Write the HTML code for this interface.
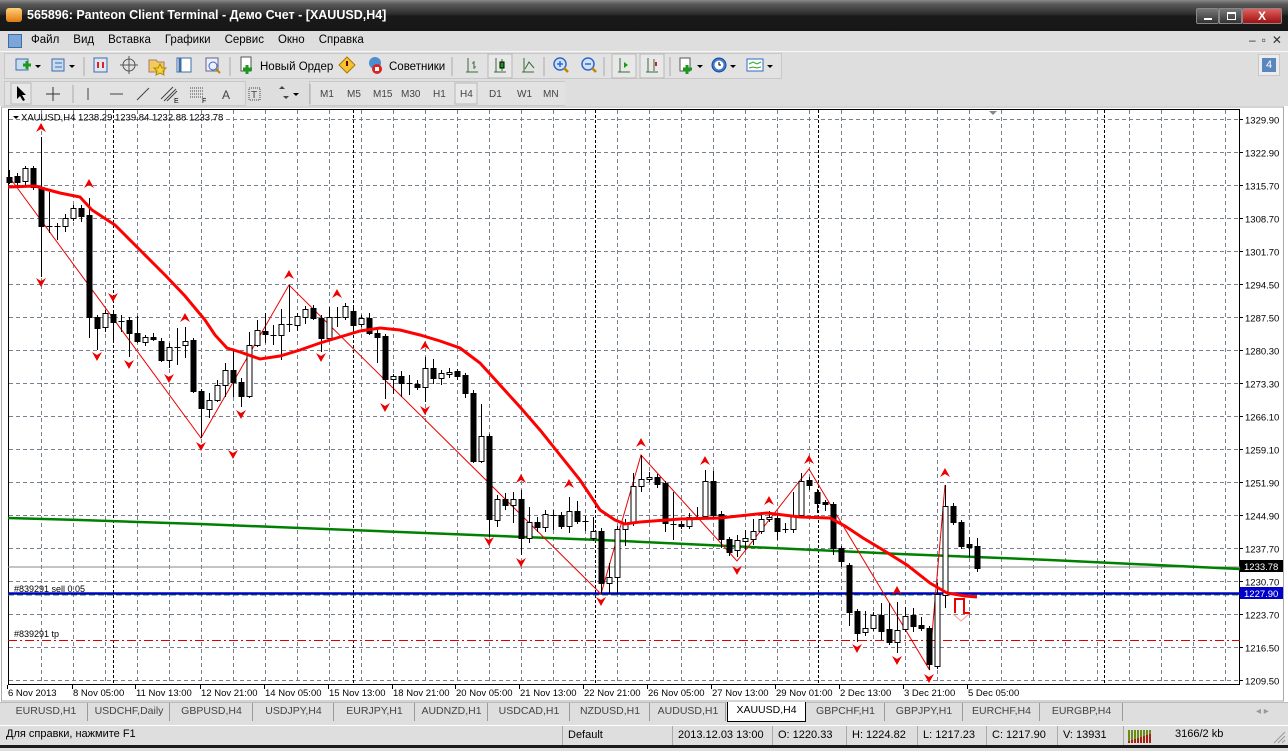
<!DOCTYPE html>
<html><head><meta charset="utf-8">
<style>
*{margin:0;padding:0;box-sizing:border-box}
body{width:1288px;height:748px;overflow:hidden;background:#dedede;font-family:"Liberation Sans","DejaVu Sans",sans-serif;font-size:11px;color:#000;position:relative}
.abs{position:absolute}
#title{left:0;top:0;width:1288px;height:31px;background:linear-gradient(#8a8a8a 0px,#5a5a5a 4px,#2e2e2e 14px,#1a1a1a 16px,#161616 31px);color:#fff;font-weight:bold;font-size:12.5px}
.menu span{margin-right:14px}
.tb{border:1px solid #c8c8c8;background:#e2e2e2}
.tab{position:absolute;top:0;height:18px;line-height:17px;border-right:1px solid #9a9a9a;text-align:center;font-size:10.5px;color:#444}
.st{position:absolute;top:0;height:19px;line-height:18px;font-size:11px;border-left:1px solid #aaa;padding-left:5px}
</style></head><body>
<div id="title" class="abs">
 <div class="abs" style="left:6px;top:8px;width:16px;height:14px;border-radius:3px;background:linear-gradient(#ffcf7a,#e07a10)"></div>
 <div class="abs" style="left:27px;top:8px;">565896: Panteon Client Terminal - Демо Счет - [XAUUSD,H4]</div>
 <div class="abs" style="left:1196px;top:8px;width:23px;height:16px;border:1px solid #888;background:linear-gradient(#777,#333);border-radius:2px"><div style="margin:9px 0 0 7px;width:8px;height:2px;background:#fff"></div></div>
 <div class="abs" style="left:1219px;top:8px;width:23px;height:16px;border:1px solid #888;background:linear-gradient(#777,#333)"><div style="margin:3px 0 0 7px;width:9px;height:8px;border:1px solid #fff;border-top-width:2px"></div></div>
 <div class="abs" style="left:1242px;top:8px;width:40px;height:16px;border:1px solid #888;background:linear-gradient(#e06060,#a01010);border-radius:2px;text-align:center;font-size:12px;line-height:14px">X</div>
</div>
<div class="abs menu" style="left:0;top:32px;width:1288px;height:19px;background:#dedede;font-size:11.5px;">
 <div class="abs" style="left:8px;top:2px;width:14px;height:14px;background:#7aa6d8;border:1px solid #3d6ca8"></div>
 <div class="abs" style="left:31px;top:2px;"><span>Файл</span><span>Вид</span><span>Вставка</span><span>Графики</span><span>Сервис</span><span>Окно</span><span>Справка</span></div>
 <div class="abs" style="left:1249px;top:1px;color:#333;font-size:12px;letter-spacing:6px">–▫✕</div>
</div>
<div class="abs" style="left:0;top:51px;width:1288px;height:1px;background:#f8f8f8"></div>
<div class="abs tb" style="left:4px;top:53px;width:778px;height:26px"></div>
<div class="abs" style="left:1258px;top:54px;width:22px;height:22px;background:#ececec;border:1px solid #c8c8c8"><div style="margin:3px;width:14px;height:14px;background:#5a86c0;color:#fff;font-size:11px;text-align:center;line-height:14px">4</div></div>
<svg class="abs" style="left:0;top:53px" width="790" height="27">
 <g fill="none" stroke-width="1">
 <rect x="16" y="6" width="12" height="11" fill="#c8dcf0" stroke="#3d6ca8"/><path d="M23 12h8M27 8v8" stroke="#1a9a1a" stroke-width="3"/><path d="M35 12l3 3 3-3z" fill="#000"/>
 <rect x="52" y="6" width="12" height="12" fill="#c8dcf0" stroke="#3d6ca8"/><path d="M55 10h7M55 14h7" stroke="#3d6ca8"/><path d="M69 12l3 3 3-3z" fill="#000"/>
 <line x1="84" y1="4" x2="84" y2="23" stroke="#aaa"/>
 <rect x="94" y="5" width="13" height="14" fill="#dde8f4" stroke="#3d6ca8"/><path d="M98 9v6M103 9v6" stroke="#d22" stroke-width="2"/>
 <circle cx="129" cy="12" r="6" stroke="#555"/><path d="M129 3v18M120 12h18" stroke="#555"/>
 <path d="M149 7h7l2 2h6v10h-15z" fill="#f2cc5a" stroke="#a77"/><path d="M160 11l2 4 4 0-3 3 1 4-4-2-4 2 1-4-3-3 4 0z" fill="#f6d23a" stroke="#a80"/>
 <rect x="177" y="5" width="14" height="14" fill="#fff" stroke="#3d6ca8"/><path d="M180 5v14" stroke="#3d6ca8" stroke-width="3"/>
 <rect x="206" y="5" width="12" height="13" fill="#eef" stroke="#667"/><circle cx="213" cy="13" r="4" stroke="#36c"/><path d="M216 16l4 4" stroke="#b80" stroke-width="2"/>
 <line x1="230" y1="4" x2="230" y2="23" stroke="#aaa"/>
 <rect x="241" y="4" width="10" height="14" fill="#fff" stroke="#555"/><path d="M243 16h9M247 12v9" stroke="#1a9a1a" stroke-width="3"/>
 <path d="M347 4l8 8-8 8-8-8z" fill="#f4c430" stroke="#a70"/><path d="M347 8v5" stroke="#600" stroke-width="2"/>
 <circle cx="375" cy="10" r="6" fill="#4a90d0"/><circle cx="377" cy="16" r="5" fill="#d22"/><rect x="375" y="14" width="4" height="4" fill="#fff"/>
 <line x1="452" y1="4" x2="452" y2="23" stroke="#aaa"/>
 <path d="M468 5v14M466 19h12M474 8v8M472 10h2M474 14h2" stroke="#3a6a3a"/>
 <rect x="488" y="1" width="24" height="24" fill="#e8e8e8" stroke="#b8b8b8"/><path d="M496 5v14M494 19h12M502 6v12" stroke="#3a6a3a"/><rect x="500" y="9" width="4" height="6" fill="#1a9a1a" stroke="#000"/>
 <path d="M524 5v14M522 19h12M525 16l4-7 5 6" stroke="#3a6a3a"/>
 <line x1="544" y1="4" x2="544" y2="23" stroke="#aaa"/>
 <circle cx="560" cy="11" r="6" fill="#cfe2f6" stroke="#36c" stroke-width="1.5"/><path d="M557 11h6M560 8v6" stroke="#36c" stroke-width="1.5"/><path d="M564 15l4 4" stroke="#b80" stroke-width="2.5"/>
 <circle cx="588" cy="11" r="6" fill="#cfe2f6" stroke="#36c" stroke-width="1.5"/><path d="M585 11h6" stroke="#36c" stroke-width="1.5"/><path d="M592 15l4 4" stroke="#b80" stroke-width="2.5"/>
 <line x1="604" y1="4" x2="604" y2="23" stroke="#aaa"/>
 <rect x="612" y="1" width="24" height="24" fill="#e8e8e8" stroke="#b8b8b8"/><path d="M620 5v14M618 19h12" stroke="#3a6a3a"/><path d="M624 9l4 3-4 3z" fill="#1a9a1a"/>
 <rect x="640" y="1" width="24" height="24" fill="#e8e8e8" stroke="#b8b8b8"/><path d="M648 5v14M646 19h12M654 6v12" stroke="#3a6a3a"/><path d="M656 9v4" stroke="#c22" stroke-width="2"/>
 <line x1="670" y1="4" x2="670" y2="23" stroke="#aaa"/>
 <rect x="680" y="5" width="10" height="13" fill="#fff" stroke="#555"/><path d="M683 16h9M687 12v9" stroke="#1a9a1a" stroke-width="3"/><path d="M697 12l3 3 3-3z" fill="#000"/>
 <circle cx="719" cy="12" r="7" fill="#3a7ad0" stroke="#1a4a90"/><circle cx="719" cy="12" r="4.5" fill="#fff"/><path d="M719 9v3h2" stroke="#000"/><path d="M730 12l3 3 3-3z" fill="#000"/>
 <rect x="747" y="6" width="16" height="12" fill="#fff" stroke="#36c"/><path d="M749 11l4-2 4 2 4-2M749 15l4-1 4 1 4-1" stroke="#2a2"/><path d="M767 12l3 3 3-3z" fill="#000"/>
 </g>
 <text x="260" y="17" font-family="Liberation Sans" font-size="11.5">Новый Ордер</text>
 <text x="389" y="17" font-family="Liberation Sans" font-size="11.5">Советники</text>
</svg>
<div class="abs tb" style="left:4px;top:81px;width:242px;height:25px"></div>
<div class="abs tb" style="left:309px;top:81px;width:256px;height:25px;border-right:none"></div>
<svg class="abs" style="left:0;top:81px" width="600" height="26">
 <rect x="11" y="2" width="20" height="21" fill="#e8e8e8" stroke="#b8b8b8"/>
 <path d="M17 5v13l3-3 3 5 2-1-3-5h4z" fill="#000"/>
 <path d="M53 6v14M46 13h14" stroke="#333"/>
 <line x1="73" y1="4" x2="73" y2="22" stroke="#aaa"/>
 <path d="M88 7v12M110 13h13M137 19l12-12" stroke="#444"/>
 <path d="M161 18l12-12M164 20l12-12M167 20l10-10" stroke="#444"/><text x="174" y="22" font-size="7" font-family="Liberation Sans">E</text>
 <path d="M190 7h14M190 10h14M190 13h14M190 16h14" stroke="#444" stroke-dasharray="1 1"/><text x="202" y="22" font-size="7" font-family="Liberation Sans">F</text>
 <text x="222" y="18" font-size="12" fill="#444" font-family="Liberation Sans">A</text>
 <rect x="249" y="7" width="11" height="12" fill="none" stroke="#444" stroke-dasharray="1 1"/><text x="251" y="17" font-size="10" fill="#444" font-family="Liberation Sans">T</text>
 <path d="M279 8l3-3 3 3zM283 15l3 3 3-3z" fill="#444"/><path d="M293 12l3 3 3-3z" fill="#000"/>
 <line x1="310" y1="3" x2="310" y2="23" stroke="#aaa"/>
 <rect x="455" y="2" width="22" height="21" fill="#e8e8e8" stroke="#b8b8b8"/>
 <g font-family="Liberation Sans" font-size="10" fill="#444">
 <text x="320" y="16">M1</text><text x="347" y="16">M5</text><text x="373" y="16">M15</text><text x="401" y="16">M30</text><text x="433" y="16">H1</text><text x="460" y="16">H4</text><text x="489" y="16">D1</text><text x="517" y="16">W1</text><text x="543" y="16">MN</text>
 </g>
</svg>
<svg id="ch" class="abs" style="left:0;top:106px" width="1288" height="596" font-family="Liberation Sans" font-size="10">
<rect x="0" y="0" width="1288" height="596" fill="#fff"/>
<rect x="1.5" y="1" width="1282" height="594" fill="none" stroke="#aaa"/>
<g id="grid" stroke="#788090" stroke-dasharray="4 3"></g>
<g stroke="#000" stroke-dasharray="3 2">
<line x1="113.5" y1="4" x2="113.5" y2="578"/><line x1="353.5" y1="4" x2="353.5" y2="578"/><line x1="595.5" y1="4" x2="595.5" y2="578"/><line x1="818.5" y1="4" x2="818.5" y2="578"/><line x1="1104.5" y1="4" x2="1104.5" y2="578"/>
</g>
<rect x="8.5" y="3.5" width="1231" height="575" fill="none" stroke="#000"/>
<path d="M989 5l4 4 4-4z" fill="#888"/>
<line x1="8" y1="461" x2="1240" y2="461" stroke="#8a8a8a"/>
<line x1="8" y1="534.5" x2="1240" y2="534.5" stroke="#d00" stroke-dasharray="9 3 2 3"/>
<line x1="8" y1="489" x2="1240" y2="489" stroke="#1a9a1a" stroke-dasharray="6 3"/>
<path d="M8 412L80 414L200 418L300 422L450 428L600 434L750 441L900 448L1050 454L1240 463" stroke="#008000" stroke-width="2.5" fill="none"/>
<line x1="8" y1="487.5" x2="1240" y2="487.5" stroke="#0000c8" stroke-width="2.5"/>
<g id="zz" stroke="#e00" stroke-width="1" fill="none"><path d="M10 72L201 332L289 179L601 488L641 349L737 455L809 363L929 563L945 379"/></g>
<g id="cd"></g>
<path id="ma" fill="none" stroke="#f00" stroke-width="3" d="M8 81L35 80L45 83L60 87L80 91L92 104L115 119L140 144L165 169L185 190L205 214L215 229L227 242L240 246L260 253L280 250L300 244L320 237L340 231L360 225L380 222L400 224L420 229L440 235L460 242L480 257L500 279L520 301L540 324L560 349L580 374L600 404L615 414L625 418L640 416L680 413L720 412L767 407L800 411L830 412L845 420L863 432L883 444L907 459L930 477L947 487L965 490L977 491"/>
<g id="mk" fill="#e00"></g>
<path d="M955 507v-14h9v14h6" stroke="#e00" stroke-width="2" fill="none"/><path d="M953 508l8 7 8-7" stroke="#f99" fill="none"/>
<text x="14" y="486" font-size="9">#839291 sell 0.05</text>
<text x="14" y="531" font-size="9">#839291 tp</text>
<path d="M13 10l3 3 3-3z" fill="#000"/>
<text x="21" y="14.5" font-size="9.5">XAUUSD,H4  1238.29 1239.84 1232.88 1233.78</text>
<g id="pl" font-size="9.5"></g>
<rect x="1240" y="454" width="43" height="12" fill="#000"/><text x="1244" y="464" fill="#fff" font-size="9.5">1233.78</text>
<rect x="1240" y="481" width="43" height="12" fill="#0000c8"/><text x="1244" y="491" fill="#fff" font-size="9.5">1227.90</text>
<g id="tl" font-size="9.5"></g>
</svg>
<div class="abs" style="left:0;top:702px;width:1288px;height:20px;background:#dedede;border-top:1px solid #bbb">
<div id="tabs"></div>
<div class="abs" style="left:1256px;top:3px;color:#999;font-size:10px">◂ ▸</div>
</div>
<div class="abs" style="left:0;top:725px;width:1288px;height:20px;background:#dedede;border-top:1px solid #fff">
<div class="abs" style="left:6px;top:2px">Для справки, нажмите F1</div>
<div class="st" style="left:562px">Default</div>
<div class="st" style="left:672px">2013.12.03 13:00</div>
<div class="st" style="left:772px">O: 1220.33</div>
<div class="st" style="left:846px">H: 1224.82</div>
<div class="st" style="left:917px">L: 1217.23</div>
<div class="st" style="left:986px">C: 1217.90</div>
<div class="st" style="left:1057px">V: 13931</div>
<div class="st" style="left:1123px;padding-left:4px"><svg width="26" height="18" style="margin-top:1px"><g stroke-width="2"><path d="M1 16v-13M4 16v-13M7 16v-13M10 16v-13M13 16v-13M16 16v-13M19 16v-13M22 16v-13" stroke="#6a8a1a"/><path d="M1 16v-2M4 16v-3M7 16v-4M10 16v-5M13 16v-6M16 16v-7M19 16v-8M22 16v-9" stroke="#a82010"/></g></svg></div>
<div class="abs" style="left:1175px;top:2px">3166/2 kb</div>
<svg class="abs" style="left:1272px;top:4px" width="14" height="14"><path d="M13 2L2 13M13 6L6 13M13 10L10 13" stroke="#999"/></svg>
</div>
<div class="abs" style="left:0;top:745px;width:1288px;height:3px;background:#1a1a1a"></div>
<script>
var NS="http://www.w3.org/2000/svg",OY=106;
function el(p,t,a,txt){var e=document.createElementNS(NS,t);for(var k in a)e.setAttribute(k,a[k]);if(txt)e.textContent=txt;document.getElementById(p).appendChild(e);return e;}
for(var k=0;k<18;k++){var y=119.5+33*k-OY;el("grid","line",{x1:9,y1:y,x2:1239,y2:y});}
for(var x=41.5;x<1239;x+=32){el("grid","line",{x1:x,y1:4,x2:x,y2:578});}
var labs=["1329.90","1322.90","1315.70","1308.70","1301.70","1294.50","1287.50","1280.30","1273.30","1266.10","1259.10","1251.90","1244.90","1237.70","1230.70","1223.70","1216.50","1209.50"];
for(var k=0;k<18;k++){var y=119.5+33*k-OY;el("pl","line",{x1:1240,y1:y,x2:1243,y2:y,stroke:"#000"});el("pl","text",{x:1245,y:y+4},labs[k]);}
var tls=[[7,"6 Nov 2013"],[72,"8 Nov 05:00"],[135,"11 Nov 13:00"],[200,"12 Nov 21:00"],[264,"14 Nov 05:00"],[328,"15 Nov 13:00"],[392,"18 Nov 21:00"],[455,"20 Nov 05:00"],[519,"21 Nov 13:00"],[583,"22 Nov 21:00"],[647,"26 Nov 05:00"],[711,"27 Nov 13:00"],[775,"29 Nov 01:00"],[839,"2 Dec 13:00"],[903,"3 Dec 21:00"],[967,"5 Dec 05:00"]];
tls.forEach(function(t){el("tl","line",{x1:t[0]+0.5,y1:579,x2:t[0]+0.5,y2:583,stroke:"#000"});el("tl","text",{x:t[0]+1,y:590},t[1]);});
var D=[[177,182,170,184,0],[176,182,173,187,0],[168,181,166,185,1],[168,187,166,190,0],[187,226,137,277,0],[226,226,192,233,0],[226,226,223,240,0],[218,226,214,232,1],[208,218,205,221,1],[208,216,205,222,0],[215,317,198,338,0],[317,328,315,350,0],[313,327,310,332,1],[314,322,311,340,0],[321,321,315,332,0],[320,333,317,357,0],[333,341,316,343,0],[337,342,335,346,1],[337,339,333,341,0],[341,360,338,362,0],[347,360,343,368,1],[347,347,328,365,0],[341,345,327,358,1],[340,391,338,393,0],[391,408,389,438,0],[400,409,393,418,1],[385,400,380,402,1],[370,385,363,397,1],[370,382,350,397,0],[382,396,378,407,0],[345,396,332,398,1],[330,345,320,347,1],[331,334,313,343,0],[335,335,325,345,0],[324,335,309,360,1],[324,324,285,332,0],[316,325,313,331,1],[309,317,306,324,1],[308,318,305,320,0],[318,338,315,352,0],[317,338,307,340,1],[317,317,307,327,0],[306,317,303,320,1],[311,325,308,333,0],[318,324,315,327,1],[318,333,313,335,0],[333,337,328,363,0],[336,379,334,399,0],[376,379,374,394,1],[376,383,371,397,0],[383,383,375,395,0],[384,387,380,390,0],[368,387,357,402,1],[368,378,359,384,0],[373,378,370,385,1],[372,374,368,378,1],[371,376,369,380,0],[375,393,373,398,0],[393,461,390,463,0],[436,461,404,463,1],[436,519,434,537,0],[499,520,495,527,1],[499,505,493,510,0],[499,505,492,523,1],[499,538,490,555,0],[522,538,507,543,1],[522,527,517,532,0],[514,527,510,532,1],[515,515,510,530,0],[515,526,512,529,0],[511,526,497,533,1],[511,521,501,524,0],[521,521,516,531,0],[531,538,517,541,1],[531,583,528,594,0],[577,583,563,594,1],[529,577,526,594,1],[523,529,519,546,1],[486,523,473,526,1],[479,486,455,492,1],[477,479,472,482,1],[477,484,474,488,0],[483,523,481,532,0],[524,524,492,540,0],[524,526,521,529,0],[517,526,513,529,1],[517,517,507,520,0],[481,516,470,519,1],[481,515,471,518,0],[514,539,511,548,0],[539,552,537,556,0],[540,550,535,557,1],[538,541,530,550,1],[531,539,519,545,1],[519,531,515,534,1],[517,519,511,522,1],[518,531,513,540,0],[529,529,523,533,0],[515,529,492,533,1],[481,515,473,518,1],[480,485,477,490,0],[492,503,489,513,0],[502,504,500,511,0],[504,548,502,555,0],[548,561,546,567,0],[565,612,563,626,0],[611,633,609,642,0],[628,632,611,636,1],[615,628,612,631,1],[615,631,603,640,0],[629,642,603,645,0],[630,642,602,653,1],[616,629,607,632,1],[615,626,608,632,0],[625,628,617,631,0],[628,664,626,670,0],[594,666,583,669,1],[506,595,485,608,1],[506,522,503,525,0],[522,546,520,549,0],[544,547,537,557,0],[546,568,538,572,0]];
D.forEach(function(d,i){var x=9+8*i+0.5;el("cd","line",{x1:x,y1:d[2]-OY,x2:x,y2:d[3]-OY,stroke:"#000"});
 if(d[0]==d[1])el("cd","line",{x1:x-3,y1:d[0]-OY+0.5,x2:x+3,y2:d[0]-OY+0.5,stroke:"#000"});
 else el("cd","rect",{x:x-2.5,y:d[0]-OY+0.5,width:5,height:d[1]-d[0],fill:d[4]?"#fff":"#000",stroke:"#000"});});
var up=[[41,128],[89,184],[185,318],[289,275],[337,294],[425,346],[521,479],[569,484],[641,443],[705,461],[769,501],[809,460],[945,473],[897,591]];
var dn=[[41,282],[97,356],[129,364],[169,378],[201,446],[241,414],[321,357],[385,407],[425,410],[489,541],[521,562],[601,601],[737,570],[857,648],[897,660],[929,678],[113,297],[233,454]];
up.forEach(function(p){var x=p[0],y=p[1]-OY;el("mk","path",{d:"M"+(x-5)+" "+(y+4)+"L"+x+" "+(y-5)+"L"+(x+5)+" "+(y+4)+"L"+x+" "+(y+1)+"Z"});});
dn.forEach(function(p){var x=p[0],y=p[1]-OY;el("mk","path",{d:"M"+(x-5)+" "+(y-4)+"L"+x+" "+(y+5)+"L"+(x+5)+" "+(y-4)+"L"+x+" "+(y-1)+"Z"});});
var tabs=[[5,88,"EURUSD,H1"],[89,170,"USDCHF,Daily"],[171,253,"GBPUSD,H4"],[254,334,"USDJPY,H4"],[335,415,"EURJPY,H1"],[416,488,"AUDNZD,H1"],[489,570,"USDCAD,H1"],[571,650,"NZDUSD,H1"],[651,726,"AUDUSD,H1"],[727,806,"XAUUSD,H4"],[807,885,"GBPCHF,H1"],[886,963,"GBPJPY,H1"],[964,1040,"EURCHF,H4"],[1041,1123,"EURGBP,H4"]];
var tb=document.getElementById("tabs");
tabs.forEach(function(t){var d=document.createElement("div");d.className="tab";d.style.left=t[0]+"px";d.style.width=(t[1]-t[0])+"px";d.textContent=t[2];
 if(t[2]=="XAUUSD,H4"){d.style.background="#fff";d.style.color="#000";d.style.border="1px solid #000";d.style.borderTop="none";d.style.top="-1px";d.style.height="20px";}
 tb.appendChild(d);});
</script>
</body></html>
